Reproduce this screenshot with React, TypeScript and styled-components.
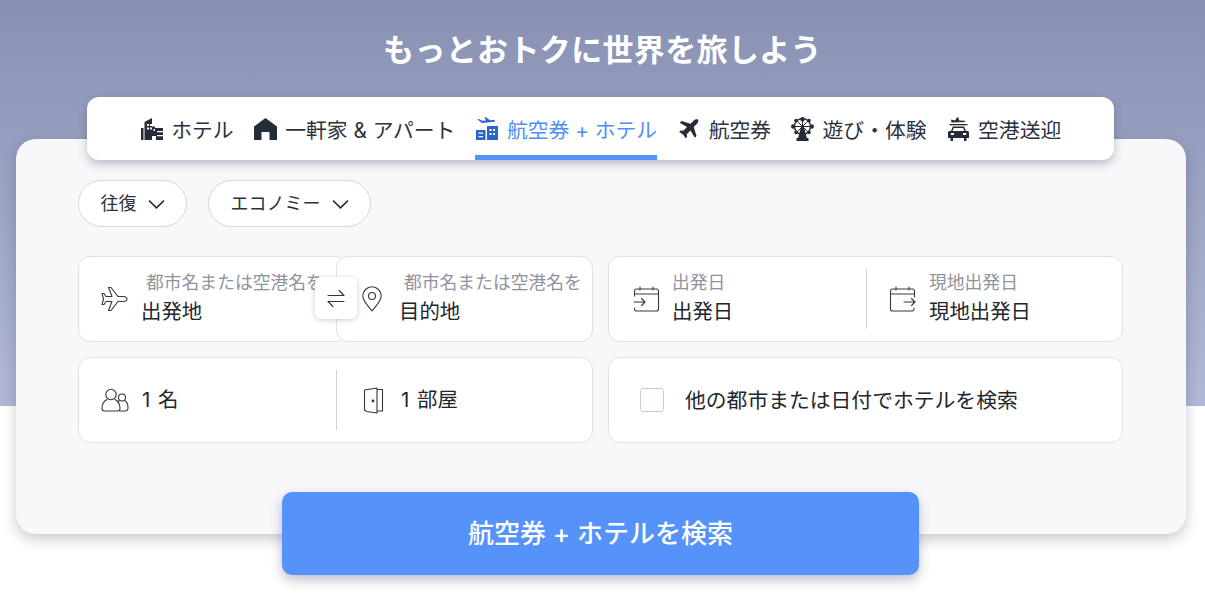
import type { ReactNode } from "react";
import styled, { createGlobalStyle } from "styled-components";

const GlobalStyle = createGlobalStyle`
	html, body {
		margin: 0;
		padding: 0;
		background: #fff;
	}
	body {
		font-family: "Inter", "Noto Sans CJK JP", sans-serif;
		overflow: hidden;
	}
	* {
		box-sizing: border-box;
	}
`;

const Page = styled.div`
	width: 1205px;
	height: 601px;
	padding-top: 28px;
	background: linear-gradient(180deg, #8891b3 0, #b1b9d6 406px) no-repeat;
	background-size: 100% 406px;
`;

const Title = styled.h1`
	margin: 0;
	height: 43px;
	line-height: 43px;
	text-align: center;
	color: #fff;
	font-size: 31px;
	font-weight: 700;
	letter-spacing: 0.35px;
`;

const TabBar = styled.nav`
	position: relative;
	z-index: 2;
	width: 1027px;
	height: 63px;
	margin: 26px 0 -21px 87px;
	display: flex;
	justify-content: center;
	gap: 20px;
	background: #fff;
	border-radius: 12px;
	box-shadow: 0 4px 10px rgba(40, 45, 70, 0.3);
`;

const Tab = styled.div<{ $active?: boolean }>`
	display: flex;
	align-items: center;
	gap: 8px;
	height: 63px;
	padding-top: 5px;
	font-size: 20.8px;
	white-space: nowrap;
	color: ${(p) => (p.$active ? "#4f8ff7" : "#2c3140")};
	border-bottom: 5px solid ${(p) => (p.$active ? "#5592fa" : "transparent")};
`;

const TabIcon = styled.span`
	width: 23.5px;
	height: 26px;
	flex: none;
	display: flex;
	align-items: center;
	justify-content: center;
`;

const Card = styled.section`
	width: 1170px;
	height: 395px;
	margin-left: 16px;
	padding: 41px 63px 0 62px;
	background: #f8f8fb;
	border-radius: 20px;
	box-shadow: 0 5px 14px rgba(40, 45, 70, 0.25);
`;

const Pills = styled.div`
	display: flex;
	gap: 21px;
	margin-bottom: 29px;
`;

const Pill = styled.div`
	height: 47px;
	padding: 0 21.5px;
	display: flex;
	align-items: center;
	gap: 11px;
	background: #fff;
	border: 1px solid #d5d7de;
	border-radius: 24px;
	color: #2c3140;
	font-size: 18px;
`;

const PillText = styled.span`
	margin-bottom: 4px;
`;

const FieldGrid = styled.div`
	display: grid;
	grid-template-columns: 515px 515px;
	grid-auto-rows: 86px;
	gap: 15px;
`;

const Box = styled.div`
	position: relative;
	display: flex;
	align-items: center;
	background: #fff;
	border: 1px solid #dfe1e8;
	border-radius: 12px;
`;

const RouteBox = styled.div`
	position: relative;
	display: grid;
	grid-template-columns: 258px 257px;
`;

const RoutePart = styled(Box)<{ $side: "left" | "right" }>`
	padding-left: ${(p) => (p.$side === "left" ? "22px" : "24px")};
	${(p) => (p.$side === "left" ? "margin-right: -12px;" : "z-index: 1;")}
`;

const Part = styled.div<{ $divider?: boolean; $pad: number }>`
	height: 60px;
	display: flex;
	align-items: center;
	padding-left: ${(p) => p.$pad}px;
	${(p) => (p.$divider ? "flex: 1; border-left: 1px solid #cfd1d8;" : "flex: none; width: 257px;")}
`;

const IconSlot = styled.div<{ $w: number }>`
	width: ${(p) => p.$w}px;
	flex: none;
	display: flex;
	align-items: center;
`;

const Stack = styled.div`
	display: flex;
	flex-direction: column;
	min-width: 0;
`;

const Label = styled.span<{ $indent?: number }>`
	margin-left: ${(p) => p.$indent ?? 0}px;
	margin-bottom: 2px;
	font-size: 17.8px;
	line-height: 24px;
	color: #8f939e;
	white-space: nowrap;
`;

const Value = styled.span`
	font-size: 20.4px;
	line-height: 30px;
	color: #23262e;
	white-space: nowrap;
	word-spacing: 2px;
`;

const SwapButton = styled.div`
	position: absolute;
	z-index: 2;
	left: 237px;
	top: 21px;
	width: 42px;
	height: 42px;
	display: flex;
	align-items: center;
	justify-content: center;
	background: #fff;
	border-radius: 6px;
	box-shadow: 0 1px 5px rgba(40, 45, 70, 0.25);
`;

const Check = styled.span`
	width: 24px;
	height: 24px;
	flex: none;
	margin: 0 21px 0 31px;
	background: #fff;
	border: 1px solid #c9ccd4;
	border-radius: 3px;
`;

const CheckText = styled.span`
	margin-bottom: 2px;
	font-size: 20.8px;
	color: #23262e;
	white-space: nowrap;
`;

const SearchButton = styled.button`
	display: block;
	width: 637px;
	height: 83px;
	margin: -42px 0 0 282px;
	padding-bottom: 5px;
	position: relative;
	z-index: 3;
	border: none;
	border-radius: 10px;
	background: #5592fa;
	color: #fff;
	font-family: inherit;
	font-size: 26px;
	font-weight: 500;
	box-shadow: 0 5px 12px rgba(40, 45, 70, 0.3);
`;

const ink = "#262b38";

const Chevron = () => (
	<svg width="17" height="10" viewBox="0 0 17 10" fill="none" stroke={ink} strokeWidth="1.7">
		<path d="M1 1.500 8.500 8.800 16 1.500" />
	</svg>
);

const HotelIcon = () => (
	<svg width="22" height="22" viewBox="0 0 22 22" fill={ink}>
		<path d="M0 10h2.500v12H0z" />
		<path d="M3.500 4 11 0v8.500h3v1.500h8v12h-7v-4h-4v4H3.500z" />
		<path
			fill="#fff"
			d="M6 6h2v2H6zM9 6h2v2H9zM6 9.500h2v2H6zM9 9.500h2v2H9zM12.500 11h1.500v2h-1.500zM16 13h6v1.200h-6zM16 17h6v1.200h-6z"
		/>
	</svg>
);

const HomeIcon = () => (
	<svg width="23" height="22" viewBox="0 0 23 22" fill={ink}>
		<path d="M11.500 0 23 8.500V22h-7.500v-8h-8v8H0V8.500z" />
	</svg>
);

const BundleIcon = () => (
	<svg width="22" height="23" viewBox="0 0 22 23" fill="#2767c9">
		<path d="M1.500 2.500 3 2l3 1.800 4-.3L8.500 0l1.500.2 4 3 3.500-.3c1.200 0 1.800.6 1.500 1.100-.3.600-1.500 1-3 1.100L6 6z" />
		<path d="M0 13h9.500v10H0zM11 9h11v14H11z" />
		<path
			fill="#fff"
			d="M2.500 15.500h4.500v1.300H2.500zM2.500 19h4.500v1.300H2.500zM13.500 12h2v2h-2zM17 12h2v2h-2zM13.500 16h2v2h-2zM17 16h2v2h-2z"
		/>
	</svg>
);

const PlaneIcon = () => (
	<svg width="21" height="20" viewBox="0 0 20 20" fill={ink}>
		<path d="M19.500.500c-1.200-.8-3-.2-4.200 1L12 4.800 3 2 1.300 3.700 8.500 8l-3.700 3.800-2.800-.4L.700 12.700l3.800 2.800 2.800 3.800 1.300-1.300-.4-2.800L12 11.500l4.300 7.200L18 17l-2.800-9 3.300-3.300c1.200-1.200 1.800-3 1-4.200z" />
	</svg>
);

const WheelIcon = () => (
	<svg width="23" height="24" viewBox="0 0 23 24" fill="none" stroke={ink} strokeWidth="1.400">
		<circle cx="11.500" cy="9.500" r="8" />
		<path d="M11.500 1.500v16M3.500 9.500h16M5.500 3.500l12 12M17.500 3.500l-12 12" strokeWidth="1" />
		<g fill={ink} stroke="none">
			<circle cx="11.500" cy="2.200" r="2.200" />
			<circle cx="2.200" cy="9.500" r="2.200" />
			<circle cx="20.800" cy="9.500" r="2.200" />
			<circle cx="5" cy="3.500" r="1.800" />
			<circle cx="18" cy="3.500" r="1.800" />
			<circle cx="5" cy="15.500" r="1.800" />
			<circle cx="18" cy="15.500" r="1.800" />
			<path d="M10 10h3l3 11.500H7z" />
			<path d="M5.500 21h12v3h-12z" />
		</g>
	</svg>
);

const CarIcon = () => (
	<svg width="21" height="24" viewBox="0 0 21 24" fill={ink}>
		<path d="M3 2.500 7 3.500 9 .500l1.500.1.500 2.900 5.500.3c1 .1 1 1.200 0 1.300L3.500 5.500z" />
		<path d="M1.500 7h18v1.300h-18z" />
		<path d="M4.800 9.500h11.400L18 14h1.500c.8 0 1.500.7 1.500 1.500V21h-2.500v3H16v-3H5v3H2.500v-3H0v-5.500c0-.8.700-1.500 1.500-1.500H3zm1 1.400L4.600 14h11.800l-1.200-3.100z" />
		<path fill="#fff" d="M2.800 16h3.200v2H2.800zM15 16h3.200v2H15z" />
	</svg>
);

const Line = ({ children, w, h }: { children: ReactNode; w: number; h: number }) => (
	<svg
		width={w}
		height={h}
		viewBox={`0 0 ${w} ${h}`}
		fill="none"
		stroke="#33373f"
		strokeWidth="1.100"
		strokeLinejoin="round"
		strokeLinecap="round"
	>
		{children}
	</svg>
);

const DepartIcon = () => (
	<Line w={27} h={26}>
		<path d="M26 13c0-1.500-2-2.500-4-2.500h-5L10 1.500H7.500L11 10.500H5L3 7.500H1L2.500 13 1 18.500h2l2-3h6L7.500 24.500H10l7-9h5c2 0 4-1 4-2.500z" />
	</Line>
);

const PinIcon = () => (
	<Line w={22} h={26}>
		<path d="M11 25C7.500 20 1.800 15.500 1.800 10a9.200 9.200 0 0 1 18.400 0C20.200 15.500 14.500 20 11 25z" />
		<circle cx="11" cy="10" r="3.500" />
	</Line>
);

const SwapIcon = () => (
	<Line w={18} h={20}>
		<path d="M1 7.500h16l-5-5M17 13.500H1l5 5" />
	</Line>
);

const CalendarInIcon = () => (
	<Line w={27} h={26}>
		<path d="M7 1v3M20 1v3M1.500 10V5a2 2 0 0 1 1.500-2h21a2 2 0 0 1 1.500 2v18a2 2 0 0 1-2 2H3a2 2 0 0 1-1.500-2v-1" />
		<path d="M1.500 8h24M1 16h11M8.500 12.500 12 16l-3.500 3.500" />
	</Line>
);

const CalendarOutIcon = () => (
	<Line w={27} h={26}>
		<path d="M7 1v3M20 1v3M25.500 11V5a2 2 0 0 0-1.500-2H3a2 2 0 0 0-1.500 2v18a2 2 0 0 0 2 2h20a2 2 0 0 0 1.500-2v-1" />
		<path d="M1.500 8h24M15 16h11M22.500 12.500 26 16l-3.500 3.500" />
	</Line>
);

const PeopleIcon = () => (
	<Line w={28} h={24}>
		<circle cx="10" cy="6.500" r="5.200" />
		<path d="M6 11.500C3 13 1 17 1 20.500 1 22 2 23 3.500 23h13c1.500 0 2.500-1 2.500-2.500 0-3.500-2-7.500-5-9" />
		<circle cx="21" cy="9.500" r="3.500" />
		<path d="M18.500 12.500c-1 .5-1.500 1-2 1.500M23.500 12.500c2 1 3.500 4 3.500 7 0 2-1 3.500-3 3.500h-5" />
	</Line>
);

const DoorIcon = () => (
	<Line w={21} h={27}>
		<path d="M14 2.500h5.500V24H14M1.500 3l12.500-2v25L3.500 24.500l-2-1.500z" />
		<circle cx="10" cy="14" r="0.900" fill="#33373f" />
	</Line>
);

const App = () => (
	<>
		<GlobalStyle />
		<Page>
			<Title>もっとおトクに世界を旅しよう</Title>
			<TabBar>
				<Tab><TabIcon><HotelIcon /></TabIcon>ホテル</Tab>
				<Tab><TabIcon><HomeIcon /></TabIcon>一軒家 &amp; アパート</Tab>
				<Tab $active><TabIcon><BundleIcon /></TabIcon>航空券 + ホテル</Tab>
				<Tab><TabIcon><PlaneIcon /></TabIcon>航空券</Tab>
				<Tab><TabIcon><WheelIcon /></TabIcon>遊び・体験</Tab>
				<Tab><TabIcon><CarIcon /></TabIcon>空港送迎</Tab>
			</TabBar>
			<Card>
				<Pills>
					<Pill><PillText>往復</PillText><Chevron /></Pill>
					<Pill><PillText>エコノミー</PillText><Chevron /></Pill>
				</Pills>
				<FieldGrid>
					<RouteBox>
						<RoutePart $side="left">
							<IconSlot $w={40}><DepartIcon /></IconSlot>
							<Stack>
								<Label $indent={5}>都市名または空港名を</Label>
								<Value>出発地</Value>
							</Stack>
						</RoutePart>
						<RoutePart $side="right">
							<IconSlot $w={38}><PinIcon /></IconSlot>
							<Stack>
								<Label $indent={5}>都市名または空港名を</Label>
								<Value>目的地</Value>
							</Stack>
						</RoutePart>
						<SwapButton><SwapIcon /></SwapButton>
					</RouteBox>
					<Box>
						<Part $pad={24}>
							<IconSlot $w={39}><CalendarInIcon /></IconSlot>
							<Stack>
								<Label>出発日</Label>
								<Value>出発日</Value>
							</Stack>
						</Part>
						<Part $divider $pad={22}>
							<IconSlot $w={40}><CalendarOutIcon /></IconSlot>
							<Stack>
								<Label>現地出発日</Label>
								<Value>現地出発日</Value>
							</Stack>
						</Part>
					</Box>
					<Box>
						<Part $pad={22}>
							<IconSlot $w={41}><PeopleIcon /></IconSlot>
							<Value>1 名</Value>
						</Part>
						<Part $divider $pad={26}>
							<IconSlot $w={38}><DoorIcon /></IconSlot>
							<Value>1 部屋</Value>
						</Part>
					</Box>
					<Box>
						<Check />
						<CheckText>他の都市または日付でホテルを検索</CheckText>
					</Box>
				</FieldGrid>
			</Card>
			<SearchButton type="button">航空券 + ホテルを検索</SearchButton>
		</Page>
	</>
);

export default App;
